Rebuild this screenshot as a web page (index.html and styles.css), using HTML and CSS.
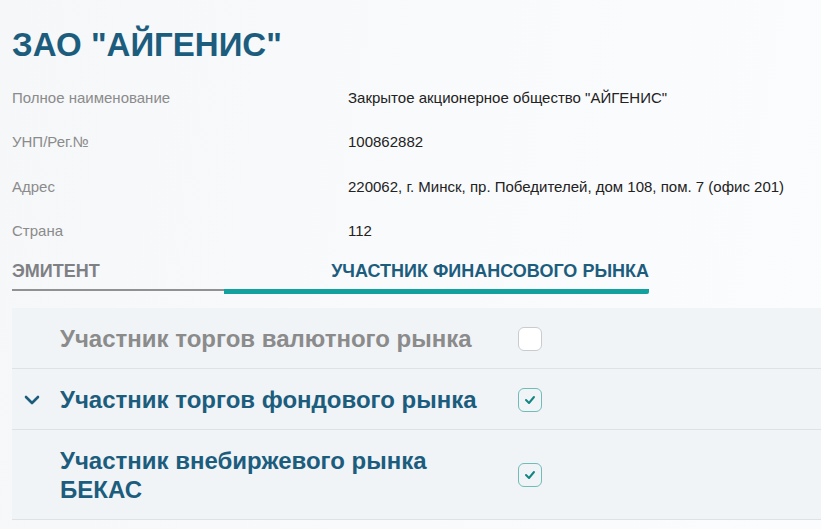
FILE: index.html
```html
<!DOCTYPE html>
<html lang="ru">
<head>
  <meta charset="UTF-8" />
  <meta name="viewport" content="width=device-width, initial-scale=1" />
  <title>ЗАО "АЙГЕНИС"</title>
  <link rel="stylesheet" href="styles.css">
</head>
<body>

<div class="page">
  <h1 class="title">ЗАО "АЙГЕНИС"</h1>

  <div class="info">
    <div class="info-row">
      <div class="label">Полное наименование</div>
      <div class="value">Закрытое акционерное общество "АЙГЕНИС"</div>
    </div>
    <div class="info-row">
      <div class="label">УНП/Рег.№</div>
      <div class="value">100862882</div>
    </div>
    <div class="info-row">
      <div class="label">Адрес</div>
      <div class="value">220062, г. Минск, пр. Победителей, дом 108, пом. 7 (офис 201)</div>
    </div>
    <div class="info-row">
      <div class="label">Страна</div>
      <div class="value">112</div>
    </div>
  </div>

  <div class="tabs">
    <div class="tab">Эмитент</div>
    <div class="tab active">Участник финансового рынка</div>
  </div>

  <div class="markets">
    <div class="market disabled">
      <div class="toggle"></div>
      <div class="name">Участник торгов валютного рынка</div>
      <div class="check"><span class="box"></span></div>
    </div>
    <div class="market">
      <div class="toggle">
        <svg width="16" height="10" viewBox="0 0 16 10"><path d="M2 2 L8 8 L14 2" fill="none" stroke="#1c5d7e" stroke-width="2.6" stroke-linecap="round" stroke-linejoin="round"/></svg>
      </div>
      <div class="name">Участник торгов фондового рынка</div>
      <div class="check"><span class="box checked">
        <svg width="12" height="10" viewBox="0 0 12 10"><path d="M2 5 L5 8 L10 2" fill="none" stroke="#138683" stroke-width="2" stroke-linecap="round" stroke-linejoin="round"/></svg>
      </span></div>
    </div>
    <div class="market">
      <div class="toggle"></div>
      <div class="name">Участник внебиржевого рынка БЕКАС</div>
      <div class="check"><span class="box checked">
        <svg width="12" height="10" viewBox="0 0 12 10"><path d="M2 5 L5 8 L10 2" fill="none" stroke="#138683" stroke-width="2" stroke-linecap="round" stroke-linejoin="round"/></svg>
      </span></div>
    </div>
  </div>
</div>

</body>
</html>
```

FILE: styles.css
```css
body {
  margin: 0;
  background: linear-gradient(100deg, #f5f7f9 0%, #f9fafc 50%, #fbfcfd 100%);
  font-family: "Liberation Sans", Arial, sans-serif;
  color: #222;
  height: 529px;
  overflow: hidden;
}

.page {
  padding: 22px 0 0 12px;
}

.title {
  margin: 0;
  font-size: 33px;
  line-height: 46px;
  font-weight: bold;
  color: #1c5d7e;
}

.info {
  margin-top: 8px;
}

.info-row {
  display: flex;
  font-size: 15px;
  line-height: 44.3px;
}

.label {
  width: 336px;
  color: #8b8b8b;
}

.value {
  color: #222;
}

.tabs {
  display: flex;
  align-items: flex-start;
  width: 637px;
}

.tab {
  padding: 8px 0 8px;
  font-size: 18px;
  line-height: 20px;
  font-weight: bold;
  text-transform: uppercase;
  color: #7f8083;
  border-bottom: 2px solid #909194;
  width: 212px;
}

.tab.active {
  flex: 1;
  text-align: right;
  color: #1c5d7e;
  border-bottom: 5px solid #12a19f;
  border-bottom-right-radius: 2px;
}

.markets {
  margin-top: 14px;
  background: #f1f4f7;
}

.market {
  display: grid;
  grid-template-columns: 48px 430px auto;
  align-items: center;
  padding: 16px 0 15px;
  border-bottom: 1px solid #dfe2e5;
}

.toggle {
  display: flex;
  justify-content: center;
  padding-right: 8px;
}

.name {
  font-size: 24px;
  line-height: 29px;
  font-weight: bold;
  color: #1c5d7e;
}

.market.disabled .name {
  color: #8b8b8b;
}

.check {
  padding-left: 28px;
  display: flex;
}

.box {
  width: 22px;
  height: 22px;
  border: 1px solid #c9cccf;
  border-radius: 6px;
  background: #fff;
  display: flex;
  align-items: center;
  justify-content: center;
}

.box.checked {
  background: transparent;
  border-color: #6fbcb9;
}
```
